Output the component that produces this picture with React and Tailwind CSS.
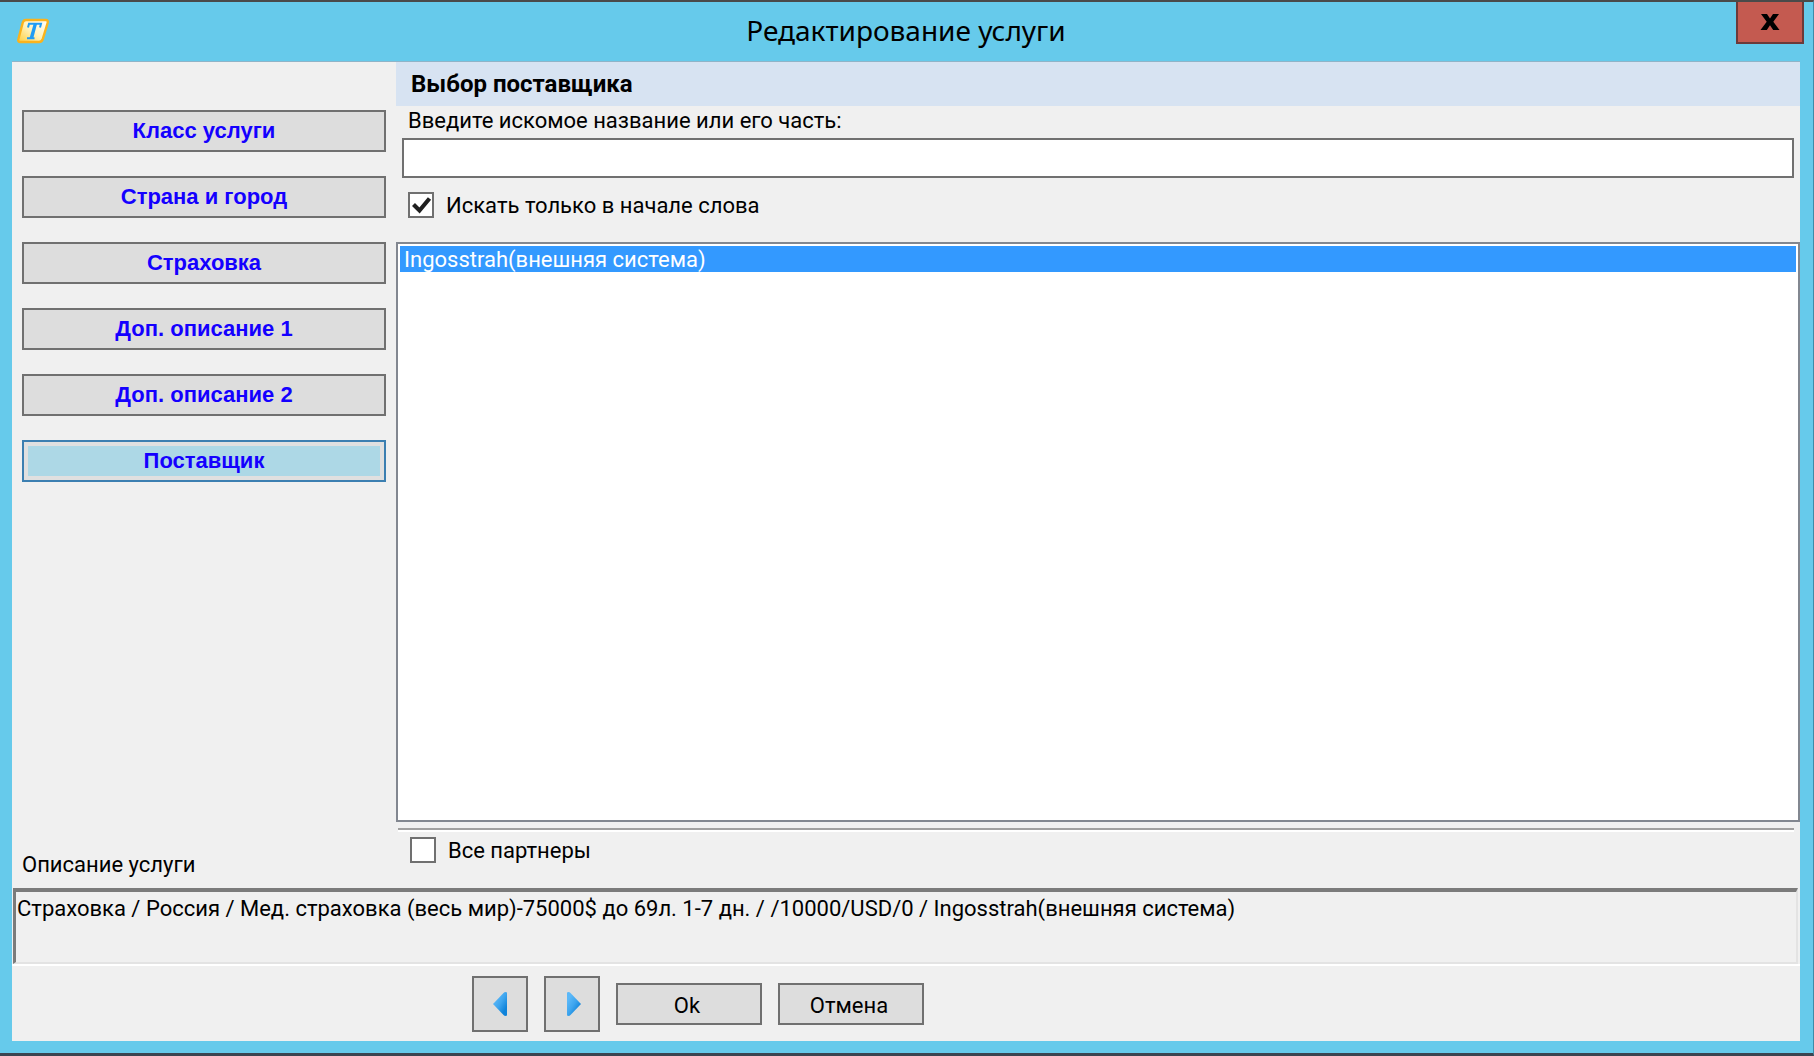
import { useState } from "react";

const steps = [
  "Класс услуги",
  "Страна и город",
  "Страховка",
  "Доп. описание 1",
  "Доп. описание 2",
  "Поставщик",
];

function AppLogo() {
  return (
    <svg viewBox="0 0 34 26" className="h-[26px] w-[34px]" aria-hidden="true">
      <defs>
        <linearGradient id="logoFill" x1="0" y1="1" x2="1" y2="0">
          <stop offset="0" stopColor="#ffcf3c" />
          <stop offset="0.5" stopColor="#fff3c0" />
          <stop offset="1" stopColor="#ffffff" />
        </linearGradient>
      </defs>
      <path
        d="M10 2H29.5Q32.5 2 31.6 5L26.6 21.5Q25.6 24 23 24H4.500Q1.500 24 2.400 21L6.800 4.500Q7.600 2 10 2Z"
        fill="url(#logoFill)"
        stroke="#fbb31c"
        strokeWidth="2.400"
      />
      <path
        d="M12 9.500L13 5.700H25L24 9.500M11 20.300H18.500"
        fill="none"
        stroke="#1e9bf5"
        strokeWidth="2"
      />
      <path d="M17.600 6H21L17.300 20H13.600Z" fill="#1e9bf5" />
    </svg>
  );
}

function Arrow({ back }) {
  const id = back ? "arrowBack" : "arrowNext";
  return (
    <svg viewBox="0 0 16 26" className="h-[26px] w-4" aria-hidden="true">
      <defs>
        <linearGradient id={id} x1="0" y1="0" x2="1" y2="1">
          <stop offset="0.2" stopColor="#5bb8f8" />
          <stop offset="0.5" stopColor="#3ea5ee" />
          <stop offset="0.8" stopColor="#0f83da" />
        </linearGradient>
      </defs>
      <path
        d={back ? "M15 1.500V24.500Q13 25.500 11.500 24L1 13L11.500 2Q13 0.500 15 1.500Z" : "M1 1.500V24.500Q3 25.500 4.500 24L15 13L4.500 2Q3 0.500 1 1.500Z"}
        fill={`url(#${id})`}
      />
    </svg>
  );
}

function Check({ id, label, checked, onChange }) {
  return (
    <div className="flex items-center gap-3">
      <span className="relative flex size-[26px]">
        <input
          id={id}
          type="checkbox"
          checked={checked}
          onChange={onChange}
          className="size-[26px] appearance-none border-2 border-[#707070] bg-white"
        />
        {checked && (
          <svg viewBox="0 0 26 26" className="pointer-events-none absolute inset-0 size-[26px]" aria-hidden="true">
            <path d="M5.500 12.500L11.500 18.500L21.500 6.500" fill="none" stroke="#202020" strokeWidth="4.200" />
          </svg>
        )}
      </span>
      <label htmlFor={id} className="pt-[2px]">{label}</label>
    </div>
  );
}

export default function App() {
  const [active, setActive] = useState(5);
  const [query, setQuery] = useState("");
  const [startOnly, setStartOnly] = useState(true);
  const [all, setAll] = useState(false);

  return (
    <div className="flex min-h-screen flex-col border-t-2 border-r border-b-3 border-t-[#4a4a4a] border-r-[#3e8ba8] border-b-[#3c4450] bg-[#66caeb] pr-[13px] pb-3 pl-3 font-['Roboto',sans-serif] text-[22px] leading-[26px] text-black">
      <header className="grid h-[59px] grid-cols-[1fr_auto_1fr] items-start">
        <div className="pt-4 pl-1">
          <AppLogo />
        </div>
        <h1 className="pt-[10px] font-['Noto_Sans',sans-serif] text-[28px] leading-9">Редактирование услуги</h1>
        <button
          type="button"
          aria-label="Закрыть"
          className="-mr-1 flex h-[42px] w-[68px] items-center justify-center justify-self-end border-2 border-t-0 border-[#6b3a3a] bg-[#c45a50]"
        >
          <svg viewBox="0 0 20 18" className="h-[18px] w-5" aria-hidden="true">
            <path d="M1 1H7L10 5.500L13 1H19L13.300 8.800L19.500 17H13.200L10 12.200L6.800 17H0.500L6.700 8.800Z" fill="#000" />
          </svg>
        </button>
      </header>

      <main className="flex flex-1 flex-col border-t border-[#8fb4c8] bg-[#f0f0f0]">
        <div className="grid flex-1 grid-cols-[384px_1fr]">
          <div className="flex flex-col justify-between pr-[10px] pb-[10px] pl-[10px]">
            <nav className="flex flex-col gap-6 pt-12">
              {steps.map((step, i) => (
                <button
                  key={step}
                  type="button"
                  onClick={() => setActive(i)}
                  className={
                    "h-[42px] border-2 font-['Liberation_Sans',sans-serif] text-[22px] font-bold text-[#1400ff] " +
                    (i === active
                      ? "border-[#3c7fb1] bg-[#add8e6] inset-ring-4 inset-ring-[#e0e0e0]"
                      : "border-[#707070] bg-[#dddddd]")
                  }
                >
                  {step}
                </button>
              ))}
            </nav>
            <h2>Описание услуги</h2>
          </div>

          <section className="flex flex-col">
            <h2 className="bg-[#d7e3f2] py-[9px] pl-[15px] text-2xl leading-[26px] font-bold">Выбор поставщика</h2>
            <label htmlFor="query" className="pt-[2px] pl-3">
              Введите искомое название или его часть:
            </label>
            <input
              id="query"
              type="text"
              value={query}
              onChange={(e) => setQuery(e.target.value)}
              className="mt-1 mr-[6px] ml-[6px] h-10 border-2 border-[#707070] bg-white px-1 outline-none"
            />
            <div className="py-[13px] pl-3">
              <Check
                id="start"
                label="Искать только в начале слова"
                checked={startOnly}
                onChange={(e) => setStartOnly(e.target.checked)}
              />
            </div>
            <ul role="listbox" aria-label="Поставщики" className="mt-[10px] flex-1 border-2 border-[#828790] bg-white p-[2px]">
              <li role="option" aria-selected="true" className="bg-[#3399ff] pt-[2px] pl-1 leading-6 text-white">
                Ingosstrah(внешняя система)
              </li>
            </ul>
            <div className="mt-[6px] mr-[6px] ml-[2px] border-t-2 border-[#a0a0a0] bg-white pt-[2px]" />
            <div className="pt-1 pb-6 pl-[14px]">
              <Check id="all" label="Все партнеры" checked={all} onChange={(e) => setAll(e.target.checked)} />
            </div>
          </section>
        </div>

        <p className="mr-[2px] ml-px h-[76px] border-t-4 border-r-2 border-b-2 border-l-3 border-t-[#7b7b7b] border-r-[#e3e3e3] border-b-[#e3e3e3] border-l-[#7b7b7b] pt-1 pl-px">
          Страховка / Россия / Мед. страховка (весь мир)-75000$ до 69л. 1-7 дн. / /10000/USD/0 / Ingosstrah(внешняя система)
        </p>

        <footer className="flex items-center gap-4 border-t-2 border-white pt-[10px] pb-[9px] pl-[460px]">
          <button type="button" aria-label="Назад" className="flex size-14 items-center justify-center border-2 border-[#707070] bg-[#dddddd]">
            <Arrow back />
          </button>
          <button type="button" aria-label="Вперёд" className="flex size-14 items-center justify-center border-2 border-[#707070] bg-[#dddddd] pl-1">
            <Arrow />
          </button>
          <button type="button" className="h-[42px] w-[146px] border-2 border-[#707070] bg-[#dddddd] pt-1 pr-1">
            Ok
          </button>
          <button type="button" className="h-[42px] w-[146px] border-2 border-[#707070] bg-[#dddddd] pt-1 pr-1">
            Отмена
          </button>
        </footer>
      </main>
    </div>
  );
}
